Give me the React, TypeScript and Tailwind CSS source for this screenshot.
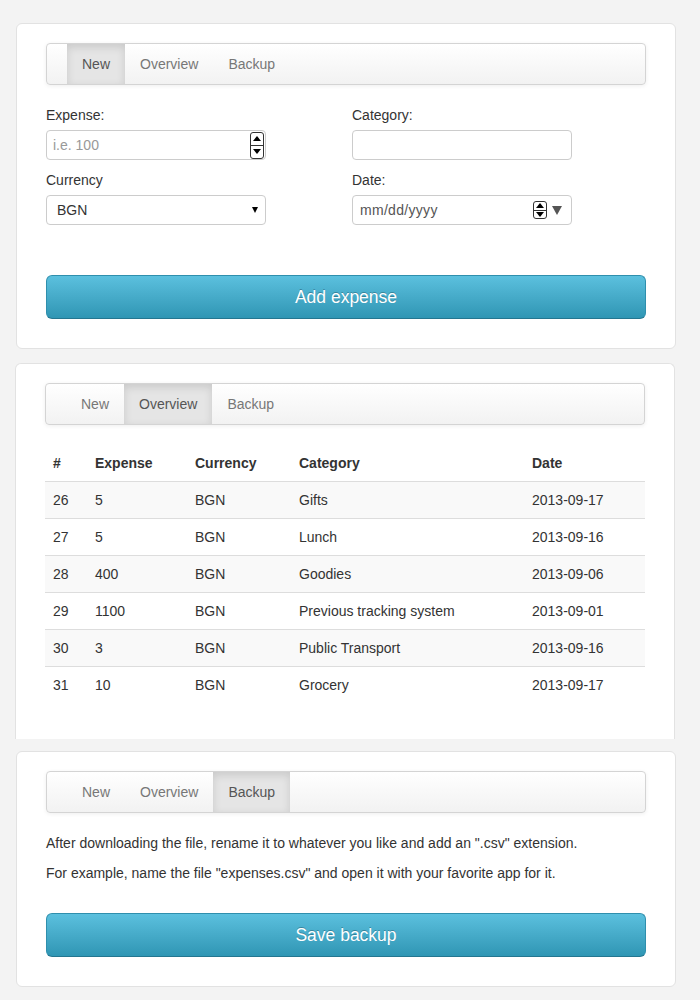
import React from "react";

const rows = [
  { id: 26, amount: "5", currency: "BGN", category: "Gifts", date: "2013-09-17" },
  { id: 27, amount: "5", currency: "BGN", category: "Lunch", date: "2013-09-16" },
  { id: 28, amount: "400", currency: "BGN", category: "Goodies", date: "2013-09-06" },
  { id: 29, amount: "1100", currency: "BGN", category: "Previous tracking system", date: "2013-09-01" },
  { id: 30, amount: "3", currency: "BGN", category: "Public Transport", date: "2013-09-16" },
  { id: 31, amount: "10", currency: "BGN", category: "Grocery", date: "2013-09-17" },
];

const Tabs = ({ active }: { active: string }) => (
  <div className="flex h-[42px] w-[600px] rounded-[4px] border border-[#d4d4d4] bg-gradient-to-b from-white to-[#f2f2f2] pl-[20px] shadow-[0_1px_4px_rgba(0,0,0,0.065)]">
    {["New", "Overview", "Backup"].map((t) => (
      <div
        key={t}
        className={
          t === active
            ? "flex h-[40px] items-center bg-[#e5e5e5] px-[15px] text-[#555] shadow-[inset_0_3px_8px_rgba(0,0,0,0.125)]"
            : "flex h-[40px] items-center px-[15px] text-[#777]"
        }
      >
        {t}
      </div>
    ))}
  </div>
);

const Spinner = ({ tall }: { tall: boolean }) => (
  <div
    className={
      tall
        ? "flex h-[27px] w-[14px] flex-col rounded-[3px] border border-[#333] bg-white"
        : "flex h-[18px] w-[14px] flex-col rounded-[3px] border border-[#333] bg-white"
    }
  >
    <div className="flex flex-1 items-center justify-center border-b border-[#333]">
      <div className="h-0 w-0 border-x-[4px] border-b-[5px] border-x-transparent border-b-black" />
    </div>
    <div className="flex flex-1 items-center justify-center">
      <div className="h-0 w-0 border-x-[4px] border-t-[5px] border-x-transparent border-t-black" />
    </div>
  </div>
);

const BlueButton = ({ label }: { label: string }) => (
  <button className="h-[44px] w-[600px] rounded-[6px] border border-[#2f8fad] border-b-[#247690] bg-gradient-to-b from-[#5bc0de] to-[#2f96b4] text-[17.5px] text-white [text-shadow:0_-1px_0_rgba(0,0,0,0.25)]">
    {label}
  </button>
);

export default function App() {
  return (
    <div className="min-h-[1000px] bg-[#f3f3f3] pt-[23px] font-['Liberation_Sans',Arial,sans-serif] text-[14px] leading-[20px] text-[#333]">
      {/* new expense */}
      <div className="ml-[16px] w-[660px] rounded-[6px] border border-[#e2e2e2] bg-white px-[29px] pb-[29px] pt-[19px]">
        <Tabs active="New" />
        <div className="mt-[20px] grid grid-cols-[306px_294px] gap-y-[10px]">
          <div>
            <div className="mb-[5px]">Expense:</div>
            <div className="flex h-[30px] w-[220px] items-center justify-between rounded-[4px] border border-[#ccc] pl-[6px] pr-[1px] text-[#999]">
              <span>i.e. 100</span>
              <Spinner tall />
            </div>
          </div>
          <div>
            <div className="mb-[5px]">Category:</div>
            <div className="h-[30px] w-[220px] rounded-[4px] border border-[#ccc]" />
          </div>
          <div>
            <div className="mb-[5px]">Currency</div>
            <div className="flex h-[30px] w-[220px] items-center justify-between rounded-[4px] border border-[#ccc] pl-[10px] pr-[7px] text-[#333]">
              <span>BGN</span>
              <div className="h-0 w-0 border-x-[3px] border-t-[6px] border-x-transparent border-t-black" />
            </div>
          </div>
          <div>
            <div className="mb-[5px]">Date:</div>
            <div className="flex h-[30px] w-[220px] items-center rounded-[4px] border border-[#ccc] pl-[7px] text-[#555]">
              <span className="flex-1 tracking-[0.3px]">mm/dd/yyyy</span>
              <Spinner tall={false} />
              <div className="ml-[5px] mr-[9px] h-0 w-0 border-x-[5px] border-t-[9px] border-x-transparent border-t-[#555]" />
            </div>
          </div>
        </div>
        <div className="mt-[50px]">
          <BlueButton label="Add expense" />
        </div>
      </div>

      {/* overview */}
      <div className="ml-[15px] mt-[14px] h-[376px] w-[660px] rounded-t-[6px] border-x border-t border-[#e2e2e2] bg-white px-[29px] pt-[19px]">
        <Tabs active="Overview" />
        <table className="mt-[20px] w-[600px] border-collapse text-left">
          <thead>
            <tr className="h-[36px] border-b border-[#ddd]">
              <th className="w-[42px] px-[8px] pt-[1px] font-bold">#</th>
              <th className="w-[100px] px-[8px] pt-[1px] font-bold">Expense</th>
              <th className="w-[104px] px-[8px] pt-[1px] font-bold">Currency</th>
              <th className="w-[233px] px-[8px] pt-[1px] font-bold">Category</th>
              <th className="px-[8px] pt-[1px] font-bold">Date</th>
            </tr>
          </thead>
          <tbody>
            {rows.map((r, i) => (
              <tr key={r.id} className={i % 2 === 0 ? "h-[37px] border-t border-[#ddd] bg-[#f9f9f9]" : "h-[37px] border-t border-[#ddd]"}>
                <td className="px-[8px]">{r.id}</td>
                <td className="px-[8px]">{r.amount}</td>
                <td className="px-[8px]">{r.currency}</td>
                <td className="px-[8px]">{r.category}</td>
                <td className="px-[8px]">{r.date}</td>
              </tr>
            ))}
          </tbody>
        </table>
      </div>

      {/* backup */}
      <div className="ml-[16px] mt-[12px] w-[660px] rounded-[6px] border border-[#e2e2e2] bg-white px-[29px] pb-[29px] pt-[19px]">
        <Tabs active="Backup" />
        <p className="mt-[20px]">After downloading the file, rename it to whatever you like and add an ".csv" extension.</p>
        <p className="mt-[10px]">For example, name the file "expenses.csv" and open it with your favorite app for it.</p>
        <div className="mt-[30px]">
          <BlueButton label="Save backup" />
        </div>
      </div>
    </div>
  );
}
